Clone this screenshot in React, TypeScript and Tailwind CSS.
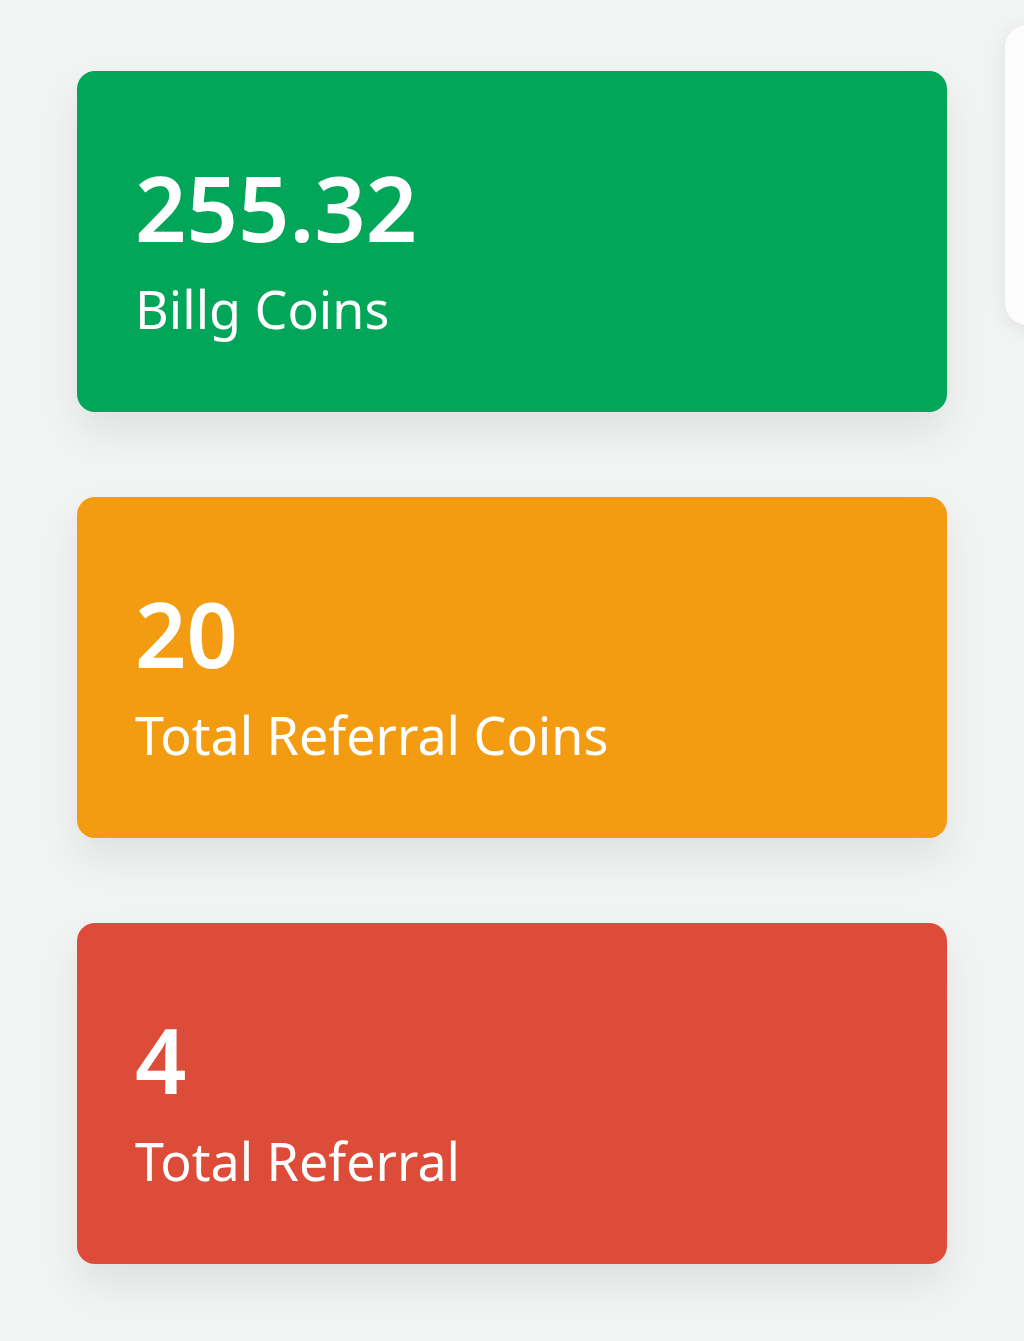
const stats = [
  { value: '255.32', label: 'Billg Coins', color: 'bg-[#02a659]' },
  { value: '20', label: 'Total Referral Coins', color: 'bg-[#f39c12]' },
  { value: '4', label: 'Total Referral', color: 'bg-[#dd4b39]' },
];

export default function App() {
  return (
    <div
      className="w-[1024px] h-[1341px] overflow-hidden bg-[#f2f4f3] flex items-start"
      style={{ fontFamily: '"Noto Sans", "Open Sans", sans-serif' }}
    >
      <div className="ml-[77px] mt-[71px] w-[870px] shrink-0 flex flex-col gap-[85px]">
        {stats.map((s) => (
          <div
            key={s.label}
            className={`${s.color} h-[341px] rounded-[18px] pl-[58px] pt-[91px] text-white shadow-[0_20px_40px_rgba(0,0,0,0.08)]`}
          >
            <div className="text-[90px] font-semibold leading-none">{s.value}</div>
            <div className="mt-[31px] text-[52px] leading-none">{s.label}</div>
          </div>
        ))}
      </div>
      <div className="ml-[58px] mt-[25px] w-[300px] h-[300px] shrink-0 rounded-[22px] bg-[#fbfcfb] shadow-[0_4px_20px_rgba(0,0,0,0.08)]" />
    </div>
  );
}
